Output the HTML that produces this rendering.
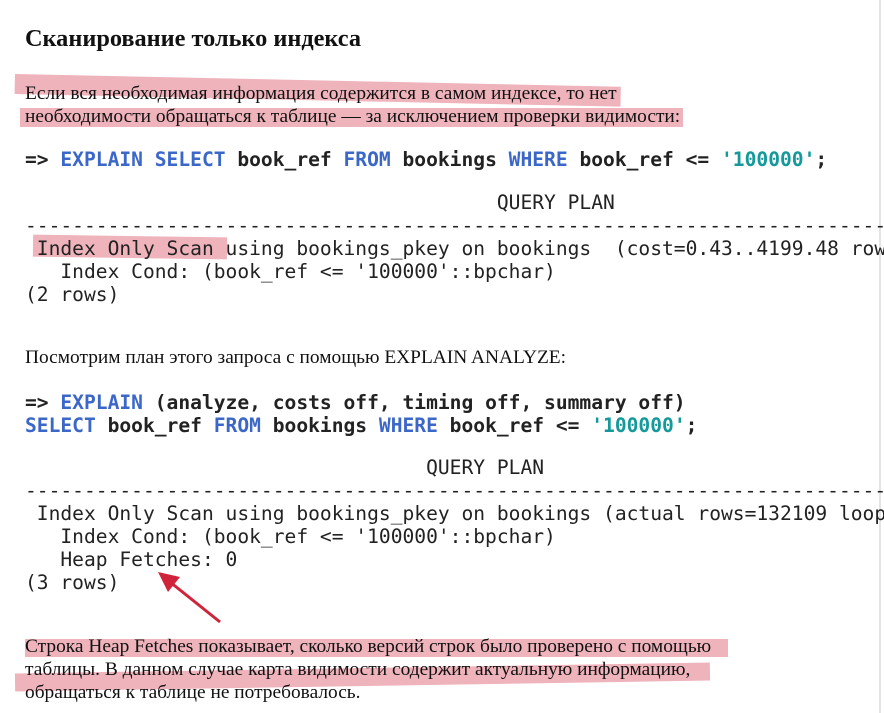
<!DOCTYPE html>
<html><head><meta charset="utf-8"><style>
html,body{margin:0;width:884px;height:713px;overflow:hidden}
body{background:#fff}
#w{position:relative;width:884px;height:713px;overflow:hidden}
.t{position:absolute;white-space:pre;line-height:23px}
.s{font-family:"Liberation Serif","Noto Serif CJK SC",serif;font-size:19.4px;color:#111;left:25px}
.m{font-family:"DejaVu Sans Mono",monospace;font-size:19.6px;color:#222;left:25px}
.b{font-weight:bold}
.k{color:#3b67c9}.q{color:#16999a}
.hl{position:absolute;background:#eeb3bb}
</style></head><body><div id="w">
<div style="position:absolute;left:879px;top:0;width:2px;height:713px;background:#e4e4e4"></div>
<div class="hl" style="left:15px;top:74px;width:606px;height:20px;transform:rotate(1.2deg);transform-origin:left top"></div>
<div class="hl" style="left:20px;top:108px;width:663px;height:19px"></div>
<div class="hl" style="left:33px;top:236px;width:194px;height:22px;transform:rotate(0.8deg)"></div>
<div class="hl" style="left:25px;top:639px;width:703px;height:18px"></div>
<div class="hl" style="left:15px;top:668px;width:695px;height:18px;transform:rotate(-0.9deg)"></div>
<div class="t" style="left:25px;top:25px;font-family:'Liberation Serif',serif;font-weight:bold;font-size:24.3px;line-height:28px;color:#111">Сканирование только индекса</div>
<div class="t s" style="top:82px">Если вся необходимая информация содержится в самом индексе, то нет
необходимости обращаться к таблице — за исключением проверки видимости:</div>
<div class="t m b" style="top:148px">=> <span class="k">EXPLAIN SELECT</span> book_ref <span class="k">FROM</span> bookings <span class="k">WHERE</span> book_ref &lt;= <span class="q">'100000'</span>;</div>
<div class="t m" style="top:191px">                                        QUERY PLAN
-------------------------------------------------------------------------------
 Index Only Scan using bookings_pkey on bookings  (cost=0.43..4199.48 rows
   Index Cond: (book_ref &lt;= '100000'::bpchar)
(2 rows)</div>
<div class="t s" style="top:346px">Посмотрим план этого запроса с помощью EXPLAIN ANALYZE:</div>
<div class="t m b" style="top:391px">=> <span class="k">EXPLAIN</span> (analyze, costs off, timing off, summary off)
<span class="k">SELECT</span> book_ref <span class="k">FROM</span> bookings <span class="k">WHERE</span> book_ref &lt;= <span class="q">'100000'</span>;</div>
<div class="t m" style="top:456px">                                  QUERY PLAN
-------------------------------------------------------------------------------
 Index Only Scan using bookings_pkey on bookings (actual rows=132109 loops
   Index Cond: (book_ref &lt;= '100000'::bpchar)
   Heap Fetches: 0
(3 rows)</div>
<svg style="position:absolute;left:0;top:0" width="884" height="713"><line x1="220" y1="622" x2="170" y2="582" stroke="#d0243a" stroke-width="3"/><polygon points="158,572 180,577 168,592" fill="#d0243a"/></svg>
<div class="t s" style="top:635px">Строка Heap Fetches показывает, сколько версий строк было проверено с помощью
таблицы. В данном случае карта видимости содержит актуальную информацию,
обращаться к таблице не потребовалось.</div>
</div></body></html>
